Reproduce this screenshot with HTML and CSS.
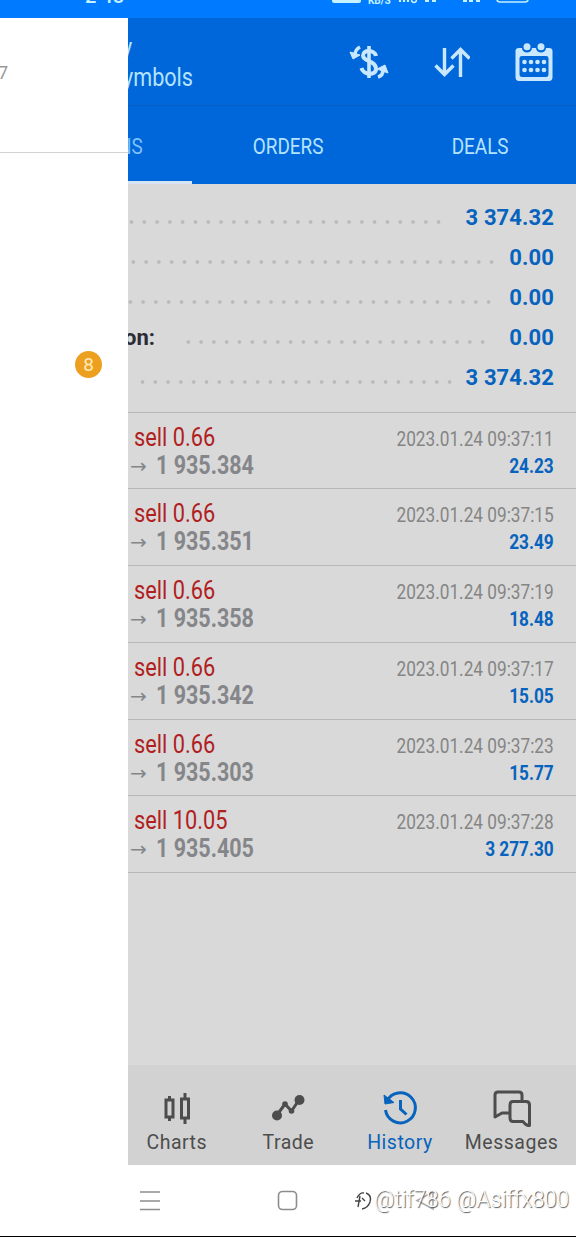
FILE: index.html
```html
<!DOCTYPE html>
<html lang="en">
<head>
    <meta charset="UTF-8">
    <meta name="viewport" content="width=device-width, initial-scale=1.0">
    <title>History</title>
    <link rel="stylesheet" href="styles.css">
</head>
<body>
    <div class="statusbar">
        <div class="clock">2 48</div>
        <svg class="status-icons" width="200" height="18" viewBox="0 0 200 18">
            <rect x="1" y="-8" width="29" height="11" rx="2" fill="#c4f2ff"/>
            <text x="37" y="4" class="status-text">KB/S</text>
            <path d="M69 -4V2M73 -4V2M77 -4V2" stroke="#c4f2ff" stroke-width="2.2"/>
            <circle cx="83" cy="0" r="2.400" fill="none" stroke="#c4f2ff" stroke-width="1.500"/>
            <path d="M96 -4V2M103 -4V2M134 -4V2M140 -4V2M147 -4V2" stroke="#c4f2ff" stroke-width="4"/>
            <rect x="166" y="-10" width="31" height="12" rx="3" fill="none" stroke="#c4f2ff" stroke-width="1.6"/>
        </svg>
    </div>

    <div class="screen">
        <div class="drawer">
            <div class="drawer-head"><span>7</span></div>
            <div class="badge">8</div>
        </div>

        <div class="panel">
            <div class="header">
                <div class="titles">
                    <div class="title">y</div>
                    <div class="subtitle">ymbols</div>
                </div>
                <div class="actions">
                    <svg width="40" height="36" viewBox="0 0 40 36" fill="none" stroke="#c9e7ff">
                        <path d="M20 2V34" stroke-width="3.6"/>
                        <path d="M27 12C26 6 14 5 14 11.500C14 18 27 16 27 25C27 32 14 31 12.500 24" stroke-width="4"/>
                        <path d="M11 3C7 5 6 8 6 11" stroke-width="3.600"/>
                        <path d="M1 8L4 15L11 11Z" fill="#c9e7ff" stroke-width="1"/>
                        <path d="M29 33C33 32 34 29 34 26" stroke-width="3.600"/>
                        <path d="M28 25L36 21L39 29Z" fill="#c9e7ff" stroke-width="1"/>
                    </svg>
                    <svg width="36" height="32" viewBox="0 0 36 32" fill="none" stroke="#c9e7ff" stroke-width="3.400">
                        <path d="M10.500 2V29M1.500 19.500L10.500 28.500L19.500 19.500"/>
                        <path d="M26.500 31V3M17.500 12.500L26.500 3.500L35.500 12.500"/>
                    </svg>
                    <svg width="38" height="38" viewBox="0 0 38 38" fill="#c9e7ff">
                        <path fill-rule="evenodd" d="M4 5H7A5 4.500 0 0 0 17 5H21A5 4.500 0 0 0 31 5H34Q37.500 5 37.500 8V34Q37.500 38 34 38H4Q.5 38 .5 34V8Q.5 5 4 5ZM7 13Q4.500 13 4.500 15V31Q4.500 34 7 34H31Q33.500 34 33.500 31V15Q33.500 13 31 13Z"/>
                        <circle cx="12" cy="3.800" r="3.500"/><circle cx="26" cy="3.800" r="3.500"/>
                        <circle cx="9.500" cy="19" r="2.300"/><circle cx="16" cy="19" r="2.300"/><circle cx="22.500" cy="19" r="2.300"/><circle cx="29" cy="19" r="2.300"/>
                        <circle cx="9.500" cy="27" r="2.300"/><circle cx="16" cy="27" r="2.300"/><circle cx="22.500" cy="27" r="2.300"/><circle cx="29" cy="27" r="2.300"/>
                    </svg>
                </div>
            </div>

            <div class="tabs">
                <div class="tab active"><span>NS</span></div>
                <div class="tab"><span>ORDERS</span></div>
                <div class="tab"><span>DEALS</span></div>
            </div>

            <div class="summary">
                <div class="sum-row"><span class="dots profit-dots"></span><b>3 374.32</b></div>
                <div class="sum-row"><span class="dots credit-dots"></span><b>0.00</b></div>
                <div class="sum-row"><span class="dots swap-dots"></span><b>0.00</b></div>
                <div class="sum-row"><span class="label">on:</span><span class="dots fee-dots"></span><b>0.00</b></div>
                <div class="sum-row"><span class="dots balance-dots"></span><b>3 374.32</b></div>
            </div>

            <div class="deals">
                <div class="deal">
                    <div class="left"><div class="side">sell 0.66</div><div class="price"><i>→</i><span>1 935.384</span></div></div>
                    <div class="right"><div class="date">2023.01.24 09:37:11</div><div class="profit">24.23</div></div>
                </div>
                <div class="deal">
                    <div class="left"><div class="side">sell 0.66</div><div class="price"><i>→</i><span>1 935.351</span></div></div>
                    <div class="right"><div class="date">2023.01.24 09:37:15</div><div class="profit">23.49</div></div>
                </div>
                <div class="deal">
                    <div class="left"><div class="side">sell 0.66</div><div class="price"><i>→</i><span>1 935.358</span></div></div>
                    <div class="right"><div class="date">2023.01.24 09:37:19</div><div class="profit">18.48</div></div>
                </div>
                <div class="deal">
                    <div class="left"><div class="side">sell 0.66</div><div class="price"><i>→</i><span>1 935.342</span></div></div>
                    <div class="right"><div class="date">2023.01.24 09:37:17</div><div class="profit">15.05</div></div>
                </div>
                <div class="deal">
                    <div class="left"><div class="side">sell 0.66</div><div class="price"><i>→</i><span>1 935.303</span></div></div>
                    <div class="right"><div class="date">2023.01.24 09:37:23</div><div class="profit">15.77</div></div>
                </div>
                <div class="deal">
                    <div class="left"><div class="side">sell 10.05</div><div class="price"><i>→</i><span>1 935.405</span></div></div>
                    <div class="right"><div class="date">2023.01.24 09:37:28</div><div class="profit">3 277.30</div></div>
                </div>
            </div>

            <div class="bottom-nav">
                <div class="nav-item">
                    <svg width="40" height="40" viewBox="0 0 40 40" fill="none" stroke="currentColor" stroke-width="3">
                        <path d="M12.500 8V12M12.500 28V33M28 5V11M28 30V36"/>
                        <rect x="9" y="12" width="7" height="17"/><rect x="24.500" y="11" width="7" height="19"/>
                    </svg>
                    <span>Charts</span>
                </div>
                <div class="nav-item">
                    <svg width="40" height="40" viewBox="0 0 40 40" fill="none" stroke="currentColor" stroke-width="3" stroke-linejoin="round">
                        <path d="M9 27L17 16L23.500 23L31 12"/>
                        <g fill="currentColor" stroke="none"><circle cx="9" cy="27.500" r="5"/><circle cx="31.500" cy="12" r="5"/><circle cx="17" cy="16" r="2.800"/><circle cx="23.500" cy="23" r="2.800"/></g>
                    </svg>
                    <span>Trade</span>
                </div>
                <div class="nav-item current">
                    <svg width="40" height="40" viewBox="0 0 40 40" fill="none" stroke="currentColor" stroke-width="3">
                        <path d="M7 13A15 15 0 1 1 5.500 22"/>
                        <path d="M4 7L5 16L14 14.500Z" fill="currentColor" stroke-width="1"/>
                        <path d="M20.500 12V21L26.500 26.500"/>
                    </svg>
                    <span>History</span>
                </div>
                <div class="nav-item">
                    <svg width="40" height="40" viewBox="0 0 40 40" fill="none" stroke="currentColor" stroke-width="3" stroke-linejoin="round">
                        <path d="M18 25H10L3 29V7Q3 4 6 4H27Q30 4 30 7V12"/>
                        <path d="M21 13.500H34Q37.500 13.500 37.500 17V37.500Q34 38 31 33.500H21Q18 33.500 18 30V17Q18 13.500 21 13.500Z"/>
                    </svg>
                    <span>Messages</span>
                </div>
            </div>
        </div>
    </div>

    <div class="system-nav">
        <svg width="576" height="70" viewBox="0 0 576 70" fill="none" stroke="#8d8d8d" stroke-width="1.600">
            <path d="M140 27H160M140 36H160M140 44.500H160"/>
            <rect x="278.500" y="26.500" width="18" height="18" rx="4"/>
            <path d="M433 27V44L417 35.500Z" stroke="#aaa"/>
        </svg>
        <div class="watermark">
            <svg width="20" height="24" viewBox="0 0 20 24" fill="none" stroke="#444" stroke-width="1.400"><path d="M3 10Q6 4 10 5M6 8L4 19M1 13H7M12 5Q18 7 16 14Q14 20 8 21M8 10L11 13"/></svg>
            <span>@tif786 @Asiffx800</span>
        </div>
    </div>
</body>
</html>
```
FILE: styles.css
```css
* {
    box-sizing: border-box;
}
body {
    margin: 0;
    width: 576px;
    height: 1237px;
    overflow: hidden;
    font-family: Roboto, Arial, sans-serif;
    background-color: #fff;
}
.statusbar {
    height: 18px;
    background-color: #007bff;
    display: flex;
    justify-content: space-between;
    overflow: hidden;
    padding: 0 45px 0 85px;
}
.clock {
    color: #c4f2ff;
    font-size: 20px;
    font-weight: 500;
    line-height: 20px;
    margin-top: -14px;
}
.status-text {
    font-size: 10px;
    font-weight: bold;
    fill: #c4f2ff;
}
.screen {
    display: flex;
    height: 1147px;
}
.drawer {
    width: 128px;
    background-color: #fff;
}
.drawer-head {
    height: 135px;
    border-bottom: 1px solid #d2d2d2;
    color: #999;
    font-size: 18px;
    line-height: 20px;
    padding-top: 45px;
}
.drawer-head span {
    margin-left: -2px;
}
.badge {
    width: 27px;
    height: 27px;
    margin: 198px 0 0 75px;
    border-radius: 50%;
    background-color: #eda020;
    color: #ffeab8;
    font-size: 19px;
    line-height: 27px;
    text-align: center;
}
.panel {
    width: 448px;
    overflow: hidden;
    background-color: #d9d9d9;
    display: flex;
    flex-direction: column;
}
.header {
    height: 88px;
    flex: none;
    background-color: #0067da;
    border-bottom: 1px solid #0860c4;
    display: flex;
    justify-content: space-between;
    padding-right: 23px;
    color: #b4e3ff;
}
.title, .subtitle {
    font-size: 26px;
    line-height: 30px;
    transform: scaleX(0.83);
    transform-origin: left;
}
.title {
    margin: 14px 0 0 -6px;
    height: 30px;
}
.subtitle {
    margin-left: -5px;
}
.actions {
    display: flex;
    align-items: center;
    gap: 45px;
}
.tabs {
    height: 78px;
    flex: none;
    display: flex;
    background-color: #0067da;
    color: #b4e3ff;
    font-size: 22px;
    line-height: 81px;
    text-align: center;
}
.tab {
    width: 192px;
}
.tab span {
    display: inline-block;
    transform: scaleX(0.86);
}
.tab.active {
    width: 64px;
    color: #7fc1fb;
    text-align: left;
    border-bottom: 3px solid #d5e3f2;
}
.tab.active span {
    margin-left: -12px;
}
.summary {
    padding: 13px 22px 14px 0;
    height: 227.5px;
    flex: none;
}
.sum-row {
    display: flex;
    height: 40px;
    align-items: center;
    justify-content: space-between;
}
.sum-row b {
    color: #0763bd;
    font-size: 22px;
    letter-spacing: 0.1px;
}
.label {
    margin-left: -4px;
    width: 58px;
    color: #2c2c35;
    font-size: 22px;
    font-weight: bold;
}
.dots {
    height: 4px;
    margin-top: 9px;
    background: radial-gradient(circle, #b9b9b9 1.4px, transparent 2.2px) right center / 12.8px 4px repeat-x;
}
.profit-dots {
    width: 317px;
}
.credit-dots {
    width: 370px;
}
.swap-dots {
    width: 367px;
}
.fee-dots {
    width: 307px;
    margin-right: auto;
}
.balance-dots {
    width: 320px;
    margin-left: 8px;
}
.deals {
    border-top: 1px solid #b8b8b8;
}
.deal {
    height: 76.8px;
    display: flex;
    justify-content: space-between;
    padding: 11px 22.5px 0 2px;
    border-bottom: 1px solid #b8b8b8;
}
.side {
    margin-left: 4px;
    color: #b0201f;
    font-size: 25px;
    line-height: 28px;
    transform: scaleX(0.87);
    transform-origin: left;
}
.price {
    display: flex;
    color: #85868a;
    font-size: 25px;
    font-weight: bold;
    line-height: 27px;
}
.price i {
    width: 26px;
    font: 20px/29px "DejaVu Sans", sans-serif;
}
.price span {
    transform: scaleX(0.86);
    transform-origin: left;
}
.right {
    text-align: right;
}
.date, .profit {
    font-size: 21px;
    line-height: 30px;
    transform: scaleX(0.82);
    transform-origin: right;
}
.date {
    color: #858585;
}
.profit {
    color: #0763bd;
    font-weight: bold;
    line-height: 25px;
}
.bottom-nav {
    height: 100px;
    margin-top: auto;
    margin-left: -7px;
    display: flex;
    background-color: #d2d2d2;
}
.nav-item {
    width: 111.6px;
    flex: none;
    display: flex;
    flex-direction: column;
    align-items: center;
    padding-top: 23px;
    color: #4d4d4d;
    font-size: 19.5px;
    letter-spacing: 0.5px;
    line-height: 30px;
}
.nav-item.current {
    color: #0763bd;
}
.system-nav {
    height: 72px;
    background-color: #fff;
    border-bottom: 1px solid #000;
    position: relative;
}
/* sits over the back button */
.watermark {
    position: absolute;
    left: 354px;
    top: 21px;
    display: flex;
    align-items: center;
    font-size: 23px;
    line-height: 28px;
    font-weight: 300;
    color: #fff;
    text-shadow: 1px 1px 1px #555;
    white-space: nowrap;
}
.watermark span {
    transform: scaleX(0.965);
    transform-origin: left;
}
```
